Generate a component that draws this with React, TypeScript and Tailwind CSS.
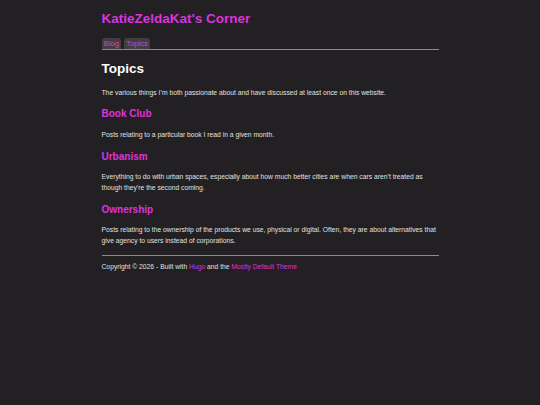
import React from "react";

const topics = [
  {
    name: "Book Club",
    desc: "Posts relating to a particular book I read in a given month.",
  },
  {
    name: "Urbanism",
    desc: "Everything to do with urban spaces, especially about how much better cities are when cars aren’t treated as though they’re the second coming.",
  },
  {
    name: "Ownership",
    desc: "Posts relating to the ownership of the products we use, physical or digital. Often, they are about alternatives that give agency to users instead of corporations.",
  },
];

export default function App() {
  return (
    <div className="min-h-[405px] bg-[#222022] text-[#e0e0e0] font-['Liberation_Sans',Arial,sans-serif]">
      <div className="w-[337px] mx-auto pt-[10px]">
        <h1 className="text-[13.5px] leading-[18px] font-bold text-[#dd33dd]">KatieZeldaKat's Corner</h1>

        <nav className="mt-[10px] flex gap-[3px] border-b border-[#8a8a8a]">
          <a className="px-[2px] rounded-t-[3px] bg-[#403e40] text-[7.75px] leading-[11px] text-[#d040d0]">Blog</a>
          <a className="px-[2px] rounded-t-[3px] bg-[#403e40] text-[7.75px] leading-[11px] text-[#d040d0]">Topics</a>
        </nav>

        <h2 className="mt-[10px] text-[13.5px] leading-[18px] font-bold text-white">Topics</h2>
        <p className="mt-[10px] text-[6.75px] leading-[10.5px]">
          The various things I’m both passionate about and have discussed at least once on this website.
        </p>

        {topics.map((t, i) => (
          <section key={t.name}>
            <h3 className={i === 0 ? "mt-[8.5px] text-[10px] leading-[14px] font-bold text-[#dd33dd]" : "mt-[9.5px] text-[10px] leading-[14px] font-bold text-[#dd33dd]"}>{t.name}</h3>
            <p className="mt-[8.5px] text-[6.75px] leading-[10.5px]">{t.desc}</p>
          </section>
        ))}

        <hr className="mt-[8.5px] border-t border-[#8a8a8a]" />
        <footer className="mt-[6px] text-[6.75px] leading-[10.5px]">
          Copyright © 2026 - Built with <a className="text-[#dd33dd]">Hugo</a> and the{" "}
          <a className="text-[#dd33dd]">Mostly Default Theme</a>
        </footer>
      </div>
    </div>
  );
}
